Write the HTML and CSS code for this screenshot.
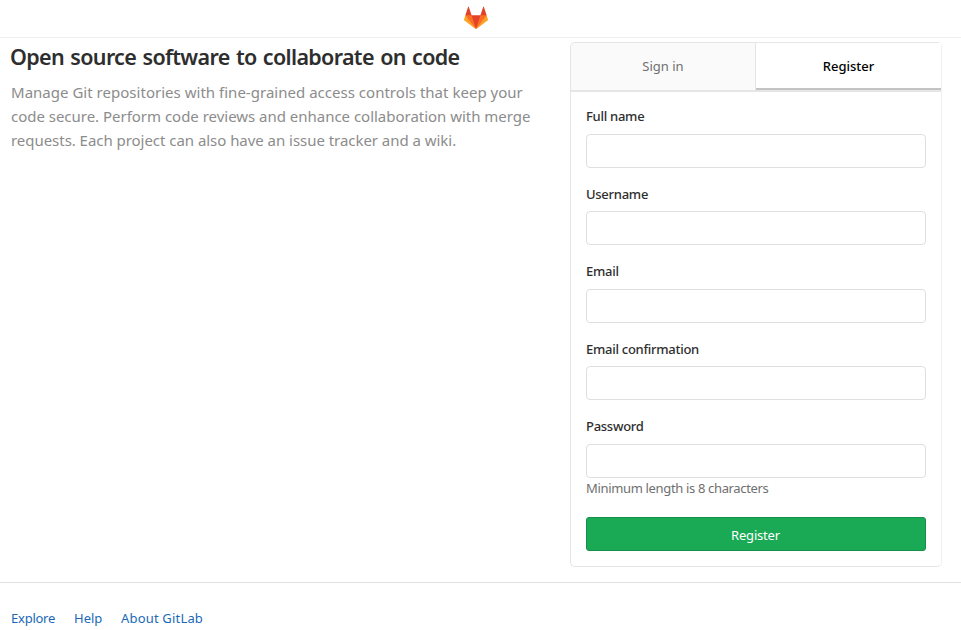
FILE: index.html
```
<!DOCTYPE html>
<html lang="en">
<head>
<meta charset="utf-8">
<title>Register · GitLab</title>
<link rel="stylesheet" href="styles.css">
</head>
<body>
<header class="navbar">
  <svg class="logo" width="24" height="24" viewBox="0 0 36 36" aria-label="GitLab">
    <path fill="#e24329" d="M2 14l9.38 9v-9l-4-12.28c-.205-.632-1.176-.632-1.38 0z"/>
    <path fill="#e24329" d="M34 14l-9.38 9v-9l4-12.28c.205-.632 1.176-.632 1.38 0z"/>
    <path fill="#e24329" d="M18 34.38L3 14h30z"/>
    <path fill="#fc6d26" d="M18 34.38L11.38 14H2l4 11z"/>
    <path fill="#fc6d26" d="M18 34.38L24.62 14H34l-4 11z"/>
    <path fill="#fca326" d="M2 14L.1 20.16c-.18.565 0 1.2.5 1.56L18 34.38z"/>
    <path fill="#fca326" d="M34 14l1.9 6.16c.18.565 0 1.2-.5 1.56L18 34.38z"/>
  </svg>
</header>
<main class="content">
  <section class="brand">
    <h1>Open source software to collaborate on code</h1>
    <p><span class="l1">Manage Git repositories with fine-grained access controls that keep your</span><br>
    <span class="l2">code secure. Perform code reviews and enhance collaboration with merge</span><br>
    <span class="l3">requests. Each project can also have an issue tracker and a wiki.</span></p>
  </section>
  <section class="card">
    <nav class="tabs">
      <a class="tab"><span>Sign in</span></a>
      <a class="tab active"><span>Register</span></a>
    </nav>
    <form class="form">
      <div class="field"><label for="name">Full name</label><input id="name" type="text"></div>
      <div class="field"><label for="user">Username</label><input id="user" type="text"></div>
      <div class="field"><label for="email">Email</label><input id="email" type="email"></div>
      <div class="field"><label for="confirm">Email confirmation</label><input id="confirm" type="email"></div>
      <div class="field"><label for="password">Password</label><input id="password" type="password"></div>
      <p class="help">Minimum length is 8 characters</p>
      <button class="submit" type="button">Register</button>
    </form>
  </section>
</main>
<footer class="footer">
  <a class="explore">Explore</a><a class="help-link">Help</a><a class="about">About GitLab</a>
</footer>
</body>
</html>
```
FILE: styles.css
```
* { box-sizing: border-box; }
body {
  margin: 0;
  height: 630px;
  overflow: hidden;
  background: #fff;
  color: #2e2e2e;
  font: 13px/20px "Noto Sans", "Open Sans", sans-serif;
}
.navbar {
  height: 38px;
  padding: 6px 0 0 464px;
  border-bottom: 1px solid #eee;
}
.logo { display: block; }
.content {
  display: flex;
  justify-content: space-between;
  height: 544px;
  padding: 4px 19px 0 11px;
}
.brand { white-space: nowrap; }
.brand h1 {
  margin: 0 0 0 -1px;
  font-size: 21.5px;
  line-height: 30px;
  font-weight: 600;
  letter-spacing: -0.67px;
  word-spacing: 1.4px;
}
.brand p {
  margin: 8px 0 0;
  font-size: 15px;
  line-height: 24px;
  color: #8c8c8c;
}
.l1 { letter-spacing: 0.02px; }
.l2 { letter-spacing: -0.02px; }
.l3 { letter-spacing: -0.04px; }
.card {
  width: 372px;
  height: 525px;
  border: 1px solid #e5e5e5;
  border-right-color: #f0f0f0;
  border-radius: 5px;
}
.tabs {
  display: flex;
  height: 49px;
  border-bottom: 2px solid #e5e5e5;
}
.tab {
  flex: 0 0 184px;
  display: flex;
  align-items: center;
  justify-content: center;
  padding-bottom: 2px;
  color: #707070;
  background: #fafafa;
  border-radius: 4px 0 0 0;
}
.tab.active {
  flex: 1;
  color: #000;
  font-weight: 500;
  background: #fff;
  border-left: 1px solid #e5e5e5;
  border-radius: 0;
  box-shadow: inset 0 -2px #c3c3c3;
}
.form { padding: 13.6px 15px; }
.field { height: 77.5px; }
.field label {
  display: block;
  height: 28px;
  padding-top: 0.8px;
  line-height: 21px;
  font-weight: 500;
  letter-spacing: -0.27px;
}
.field input {
  display: block;
  width: 100%;
  height: 34px;
  border: 1px solid #dfdfdf;
  border-radius: 4px;
  background: #fff;
}
.help {
  margin: -16.2px 0 0;
  height: 40.5px;
  line-height: 22px;
  color: #707070;
  letter-spacing: -0.34px;
}
.submit {
  display: block;
  width: 100%;
  height: 34px;
  padding: 2px 1px 0 0;
  border: 1px solid #168f48;
  border-radius: 3px;
  background: #1aaa55;
  color: #fff;
  font: inherit;
  letter-spacing: -0.2px;
}
.footer {
  display: flex;
  height: 48px;
  padding: 25px 11px 0;
  border-top: 1px solid #e1e1e1;
  color: #1b69b6;
}
.explore { width: 63px; letter-spacing: -0.24px; }
.help-link { width: 47px; }
.about { letter-spacing: 0.18px; }
```
